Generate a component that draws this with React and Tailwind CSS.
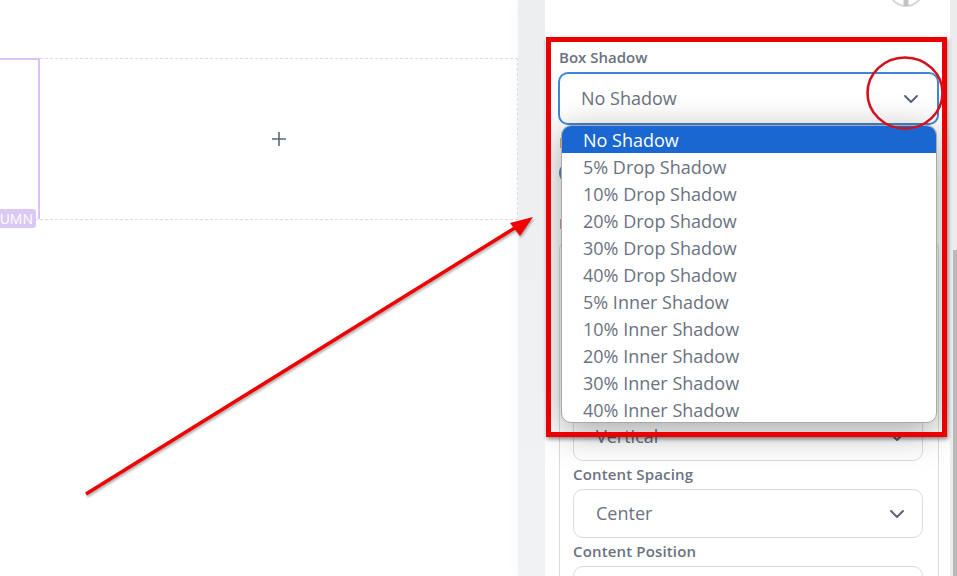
const options = ["No Shadow","5% Drop Shadow","10% Drop Shadow","20% Drop Shadow","30% Drop Shadow","40% Drop Shadow","5% Inner Shadow","10% Inner Shadow","20% Inner Shadow","30% Inner Shadow","40% Inner Shadow"];

function Chevron() {
  return (
    <svg width="16" height="10" viewBox="0 0 16 10" fill="none" stroke="#5b6478" strokeWidth="2" strokeLinecap="round" strokeLinejoin="round">
      <path d="M2 2l6 6 6-6" />
    </svg>
  );
}

function Field({ label, value, last }) {
  return (
    <div className={last ? "" : "mb-[3px]"}>
      <div className="h-5 text-[15px] leading-5 font-semibold text-[#6b7280] tracking-[0.01em]">{label}</div>
      <div className="mt-[5px] h-[49px] rounded-[10px] border border-[#d9dbe0] flex items-center justify-between pl-[22px] pr-[17px] text-[18px] text-[#6b7280] bg-white">
        <span>{value}</span>
        <Chevron />
      </div>
    </div>
  );
}

export default function App() {
  return (
    <div className="relative flex w-[957px] h-[576px] overflow-hidden bg-white font-['Open_Sans',sans-serif]">
      <main className="w-[518px] pt-[58px] bg-white">
        <div className="relative flex h-[162px] border-y border-r border-dashed border-[#dddddd]">
          <div className="w-[40px] -mt-px border-t-2 border-r-2 border-[#d9c3f6]"></div>
          <div className="flex-1 flex items-center justify-center">
            <svg width="16" height="16" viewBox="0 0 16 16" fill="none" stroke="#5c6b73" strokeWidth="1.6">
              <path d="M1 8h14M8 1v14" />
            </svg>
          </div>
          <div className="absolute left-0 top-[150px] w-[36px] h-[19px] rounded-r-[3px] bg-[#dcc8f7] overflow-hidden flex justify-end pr-[3px] text-[14px] leading-[19px] text-white whitespace-nowrap">COLUMN</div>
        </div>
      </main>

      <div className="w-[27px] bg-gradient-to-b from-[#eceef0] to-[#f1f2f4] shadow-[-6px_0_10px_rgba(0,0,0,0.015)]"></div>

      <aside className="relative w-[405px] h-full overflow-hidden bg-white">
        <svg className="ml-[342px]" width="38" height="7" viewBox="0 0 38 7" fill="none">
          <circle cx="19" cy="-11" r="17" stroke="#d8d8d8" strokeWidth="2" />
          <rect x="16.5" y="0" width="5" height="6" fill="#c4c4c4" />
        </svg>
        <div className="mt-[40px] pl-[13px] w-[394px]">
          <div className="h-5 pl-px text-[15px] leading-5 font-semibold text-[#6b7280]">Box Shadow</div>
          <div className="mt-[5px] w-[381px] h-[53px] rounded-[10px] border-2 border-[#3f86d8] flex items-center justify-between pl-[21px] pr-[18px] text-[18px] text-[#6b7280] bg-white">
            <span>No Shadow</span>
            <Chevron />
          </div>
          <div className="ml-px mt-[7px] h-5 text-[15px] leading-5 font-semibold text-[#6b7280]">Border</div>
          <div className="ml-px mt-[10px] w-[22px] h-[22px] rounded-full border-2 border-[#5d86c8]"></div>
          <div className="ml-px mt-[29px] h-5 text-[15px] leading-5 font-semibold text-[#6b7280]">Background</div>
          <div className="ml-px mt-[6px] w-[380px] h-[400px] rounded-[10px] border border-[#d9dbe0] pl-[13px] pr-[15px] pt-[147px]">
            <Field label="Content Direction" value="Vertical" />
            <Field label="Content Spacing" value="Center" />
            <Field label="Content Position" value="Center" last />
          </div>
        </div>

        <div className="absolute left-[16px] top-[125px] w-[376px] h-[298px] rounded-[10px] border border-[#a9a9a9] bg-white overflow-hidden shadow-[0_8px_36px_rgba(0,0,0,0.36)]">
          {options.map((o, i) => (
            <div key={o} className={"h-[27px] pl-[21px] text-[18px] leading-[29px] " + (i === 0 ? "bg-[#1a67d2] text-white" : "text-[#6b7280]")}>{o}</div>
          ))}
        </div>
      </aside>

      <div className="w-[7px] h-full bg-[#ececec] pt-[250px] flex justify-end">
        <div className="w-[4px] h-full bg-[#b9b9b9]"></div>
      </div>

      <div className="absolute left-[546px] top-[37px] w-[401px] h-[400px] border-[5px] border-[#ea0000] shadow-[1px_2px_4px_rgba(0,0,0,0.45)] pointer-events-none"></div>

      <svg className="absolute left-0 top-0 pointer-events-none" width="957" height="576" viewBox="0 0 957 576" fill="none">
        <ellipse cx="905" cy="93" rx="37.5" ry="35.5" stroke="#d3101d" strokeWidth="2.6" />
        <g className="drop-shadow-[1px_2px_1px_rgba(0,0,0,0.3)]">
          <path d="M86 494L518 226" stroke="#f00000" strokeWidth="3.5" />
          <path d="M533 217L510 223L520 236Z" fill="#f00000" />
        </g>
      </svg>
    </div>
  );
}
